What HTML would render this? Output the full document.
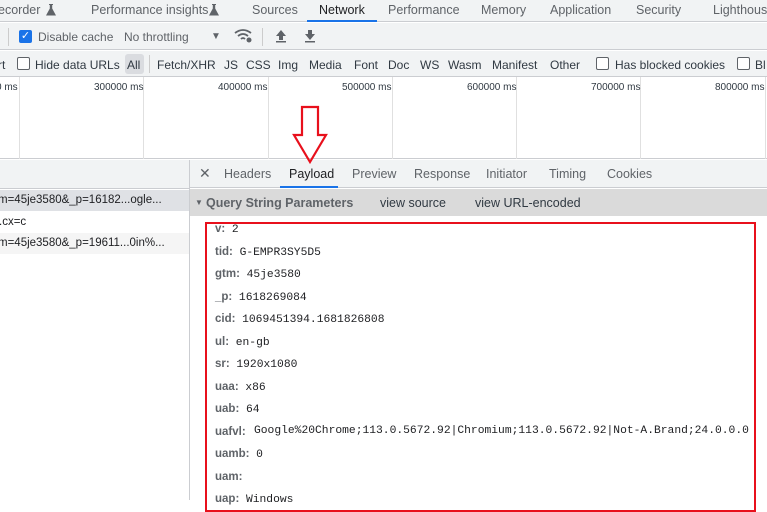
<!DOCTYPE html>
<html><head><meta charset="utf-8"><style>
*{margin:0;padding:0;box-sizing:border-box}
body{width:767px;height:500px;overflow:hidden;background:#fff;font-family:"Liberation Sans","DejaVu Sans",sans-serif;font-size:12px;color:#303942;position:relative}
.a{position:absolute;white-space:nowrap}
.g{color:#5f6368}
.cb{position:absolute;width:13px;height:13px;border:1px solid #5f6368;border-radius:2px;background:#fff}
.k{font-weight:bold;color:#5f6368;font-size:11.5px}
.v{font-family:"Liberation Mono",monospace;font-size:11.3px;color:#202124}
.ms{font-size:10px;color:#303942}
.f{position:absolute;top:58px;font-size:12px;white-space:nowrap;color:#303942}
.t{position:absolute;top:3px;font-size:12.5px;white-space:nowrap;color:#5f6368}
</style></head><body>
<!-- top tab bar -->
<div class="a" style="left:0;top:0;width:767px;height:22px;background:#f1f3f4;border-bottom:1px solid #cbcdd1"></div>
<div class="t" style="left:-2px">ecorder</div>
<svg class="a" style="left:46px;top:4px" width="10" height="12" viewBox="0 0 10 12"><path d="M3 0 H7 V1 H6.2 V4.5 L10 11.5 H0 L3.8 4.5 V1 H3 Z" fill="#5f6368"/></svg>
<div class="t" style="left:91px">Performance insights</div>
<svg class="a" style="left:209px;top:4px" width="10" height="12" viewBox="0 0 10 12"><path d="M3 0 H7 V1 H6.2 V4.5 L10 11.5 H0 L3.8 4.5 V1 H3 Z" fill="#5f6368"/></svg>
<div class="t" style="left:252px">Sources</div>
<div class="t" style="left:319px;color:#202124">Network</div>
<div class="a" style="left:307px;top:20px;width:70px;height:2px;background:#1a73e8"></div>
<div class="t" style="left:388px">Performance</div>
<div class="t" style="left:481px">Memory</div>
<div class="t" style="left:550px">Application</div>
<div class="t" style="left:636px">Security</div>
<div class="t" style="left:713px">Lighthouse</div>
<!-- toolbar -->
<div class="a" style="left:0;top:23px;width:767px;height:27px;background:#f1f3f4;border-bottom:1px solid #cbcdd1"></div>
<div class="a" style="left:8px;top:28px;width:1px;height:18px;background:#ccc"></div>
<div class="a" style="left:19px;top:30px;width:13px;height:13px;background:#1a73e8;border-radius:2px;color:#fff;font-size:11px;line-height:13px;text-align:center">&#10003;</div>
<div class="a g" style="left:38px;top:30px;font-size:12px">Disable cache</div>
<div class="a g" style="left:124px;top:30px;font-size:12px">No throttling</div>
<div class="a g" style="left:211px;top:31px;font-size:10px">&#9660;</div>
<svg class="a" style="left:234px;top:28px" width="20" height="16" viewBox="0 0 20 16"><path d="M1 5 Q9 -1 17 5 M4 8 Q9 4 14 8 M7 11 Q9 9 11 11" stroke="#5f6368" stroke-width="1.8" fill="none"/><circle cx="15" cy="12" r="2.5" fill="#5f6368"/></svg>
<div class="a" style="left:262px;top:28px;width:1px;height:18px;background:#ccc"></div>
<svg class="a" style="left:275px;top:29px" width="12" height="14"><path d="M6 1 L1 7 H4 V11 H8 V7 H11 Z" fill="#5f6368"/><rect x="1" y="12" width="10" height="1.5" fill="#5f6368"/></svg>
<svg class="a" style="left:304px;top:29px" width="12" height="14"><path d="M6 11 L1 5 H4 V1 H8 V5 H11 Z" fill="#5f6368"/><rect x="1" y="12" width="10" height="1.5" fill="#5f6368"/></svg>
<!-- filter row -->
<div class="a" style="left:0;top:51px;width:767px;height:26px;background:#f1f3f4;border-bottom:1px solid #cbcdd1"></div>
<div class="f" style="left:-2px">rt</div>
<div class="cb" style="left:17px;top:57px"></div>
<div class="f" style="left:35px">Hide data URLs</div>
<div class="a" style="left:125px;top:54px;width:19px;height:20px;background:#dadce0;border-radius:3px"></div>
<div class="f" style="left:127px">All</div>
<div class="a" style="left:149px;top:55px;width:1px;height:18px;background:#ccc"></div>
<div class="f" style="left:157px">Fetch/XHR</div>
<div class="f" style="left:224px">JS</div>
<div class="f" style="left:246px">CSS</div>
<div class="f" style="left:278px">Img</div>
<div class="f" style="left:309px">Media</div>
<div class="f" style="left:354px">Font</div>
<div class="f" style="left:388px">Doc</div>
<div class="f" style="left:420px">WS</div>
<div class="f" style="left:448px">Wasm</div>
<div class="f" style="left:492px">Manifest</div>
<div class="f" style="left:550px">Other</div>
<div class="cb" style="left:596px;top:57px"></div>
<div class="f" style="left:615px">Has blocked cookies</div>
<div class="cb" style="left:737px;top:57px"></div>
<div class="f" style="left:755px">Bl</div>
<!-- timeline -->
<div class="a" style="left:0;top:77px;width:767px;height:82px;background:#fff;border-bottom:1px solid #cbcdd1"></div>
<div class="a" style="left:19px;top:77px;width:1px;height:82px;background:#e0e0e0"></div>
<div class="a" style="left:143px;top:77px;width:1px;height:82px;background:#e0e0e0"></div>
<div class="a" style="left:268px;top:77px;width:1px;height:82px;background:#e0e0e0"></div>
<div class="a" style="left:392px;top:77px;width:1px;height:82px;background:#e0e0e0"></div>
<div class="a" style="left:516px;top:77px;width:1px;height:82px;background:#e0e0e0"></div>
<div class="a" style="left:640px;top:77px;width:1px;height:82px;background:#e0e0e0"></div>
<div class="a" style="left:765px;top:77px;width:1px;height:82px;background:#e0e0e0"></div>
<div class="a ms" style="left:-4px;top:82px">0 ms</div>
<div class="a ms" style="left:94px;top:82px">300000 ms</div>
<div class="a ms" style="left:218px;top:82px">400000 ms</div>
<div class="a ms" style="left:342px;top:82px">500000 ms</div>
<div class="a ms" style="left:467px;top:82px">600000 ms</div>
<div class="a ms" style="left:591px;top:82px">700000 ms</div>
<div class="a ms" style="left:715px;top:82px">800000 ms</div>
<!-- left panel -->
<div class="a" style="left:0;top:160px;width:189px;height:29px;background:#f1f3f4;border-bottom:1px solid #cbcdd1"></div>
<div class="a" style="left:0;top:190px;width:189px;height:21px;background:#dfe1e5"></div>
<div class="a" style="left:0;top:233px;width:189px;height:21px;background:#f5f5f5"></div>
<div class="a" style="left:-2px;top:194px;font-size:11.5px;color:#202124">m=45je3580&amp;_p=16182...ogle...</div>
<div class="a" style="left:-1px;top:216px;font-size:11.5px;color:#202124">.cx=c</div>
<div class="a" style="left:-2px;top:237px;font-size:11.5px;color:#202124">m=45je3580&amp;_p=19611...0in%...</div>
<div class="a" style="left:189px;top:160px;width:1px;height:340px;background:#cbcdd1"></div>
<!-- right detail tabs -->
<div class="a" style="left:190px;top:160px;width:577px;height:28px;background:#f1f3f4;border-bottom:1px solid #cbcdd1"></div>
<div class="a g" style="left:199px;top:165px;font-size:14px">&#10005;</div>
<div class="a g" style="left:224px;top:167px;font-size:12.5px">Headers</div>
<div class="a" style="left:289px;top:167px;font-size:12.5px;color:#202124">Payload</div>
<div class="a" style="left:280px;top:186px;width:58px;height:2px;background:#1a73e8"></div>
<div class="a g" style="left:352px;top:167px;font-size:12.5px">Preview</div>
<div class="a g" style="left:414px;top:167px;font-size:12.5px">Response</div>
<div class="a g" style="left:486px;top:167px;font-size:12.5px">Initiator</div>
<div class="a g" style="left:549px;top:167px;font-size:12.5px">Timing</div>
<div class="a g" style="left:607px;top:167px;font-size:12.5px">Cookies</div>
<!-- query header -->
<div class="a" style="left:190px;top:189px;width:577px;height:27px;background:#dadada"></div>
<div class="a" style="left:195px;top:198px;font-size:8px;color:#5f6368">&#9660;</div>
<div class="a" style="left:206px;top:196px;font-size:12.5px;font-weight:bold;color:#5f6368">Query String Parameters</div>
<div class="a" style="left:380px;top:196px;font-size:12.5px;color:#303942">view source</div>
<div class="a" style="left:475px;top:196px;font-size:12.5px;color:#303942">view URL-encoded</div>
<!-- red box -->
<div class="a" style="left:205px;top:222px;width:551px;height:290px;border:2px solid #e8101c"></div>
<div class="a" style="left:215px;top:221px"><span class="k">v:</span>&nbsp; <span class="v">2</span></div>
<div class="a" style="left:215px;top:244px"><span class="k">tid:</span>&nbsp; <span class="v">G-EMPR3SY5D5</span></div>
<div class="a" style="left:215px;top:266px"><span class="k">gtm:</span>&nbsp; <span class="v">45je3580</span></div>
<div class="a" style="left:215px;top:289px"><span class="k">_p:</span>&nbsp; <span class="v">1618269084</span></div>
<div class="a" style="left:215px;top:311px"><span class="k">cid:</span>&nbsp; <span class="v">1069451394.1681826808</span></div>
<div class="a" style="left:215px;top:334px"><span class="k">ul:</span>&nbsp; <span class="v">en-gb</span></div>
<div class="a" style="left:215px;top:356px"><span class="k">sr:</span>&nbsp; <span class="v">1920x1080</span></div>
<div class="a" style="left:215px;top:379px"><span class="k">uaa:</span>&nbsp; <span class="v">x86</span></div>
<div class="a" style="left:215px;top:401px"><span class="k">uab:</span>&nbsp; <span class="v">64</span></div>
<div class="a" style="left:215px;top:424px"><span class="k">uafvl:</span> <span class="v" style="position:absolute;left:39px;top:1px">Google%20Chrome;113.0.5672.92|Chromium;113.0.5672.92|Not-A.Brand;24.0.0.0</span></div>
<div class="a" style="left:215px;top:446px"><span class="k">uamb:</span>&nbsp; <span class="v">0</span></div>
<div class="a" style="left:215px;top:469px"><span class="k">uam:</span></div>
<div class="a" style="left:215px;top:491px"><span class="k">uap:</span>&nbsp; <span class="v">Windows</span></div>
<!-- red arrow -->
<svg class="a" style="left:290px;top:104px" width="40" height="62" viewBox="0 0 40 62"><path d="M12 3 H28 V31 H36 L20 58 L4 31 H12 Z" fill="none" stroke="#e8101c" stroke-width="2.2"/></svg>
</body></html>
